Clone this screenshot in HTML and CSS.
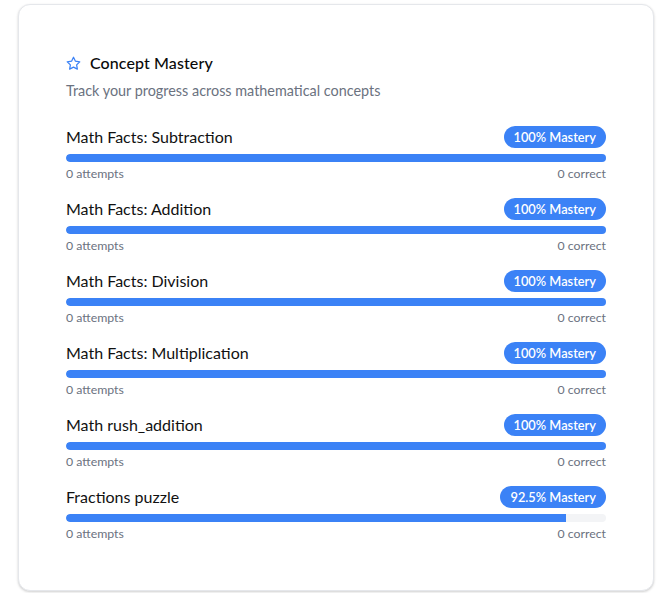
FILE: index.html
```html
<!DOCTYPE html>
<html>
<head>
<meta charset="utf-8">
<link rel="stylesheet" href="styles.css">
</head>
<body>
<div class="card">
  <div class="header">
    <h2 class="title">
      <svg class="star" viewBox="0 0 24 24" fill="none" stroke="currentColor" stroke-width="2" stroke-linecap="round" stroke-linejoin="round"><polygon points="12 2 15.09 8.26 22 9.27 17 14.14 18.18 21.02 12 17.77 5.82 21.02 7 14.14 2 9.27 8.91 8.26 12 2"/></svg>
      Concept Mastery
    </h2>
    <p class="subtitle">Track your progress across mathematical concepts</p>
  </div>
  <div class="list">
    <div class="item">
      <div class="row"><span class="label">Math Facts: Subtraction</span><span class="badge">100% Mastery</span></div>
      <div class="track"><div class="fill" style="width:100%"></div></div>
      <div class="meta"><span>0 attempts</span><span>0 correct</span></div>
    </div>
    <div class="item">
      <div class="row"><span class="label">Math Facts: Addition</span><span class="badge">100% Mastery</span></div>
      <div class="track"><div class="fill" style="width:100%"></div></div>
      <div class="meta"><span>0 attempts</span><span>0 correct</span></div>
    </div>
    <div class="item">
      <div class="row"><span class="label">Math Facts: Division</span><span class="badge">100% Mastery</span></div>
      <div class="track"><div class="fill" style="width:100%"></div></div>
      <div class="meta"><span>0 attempts</span><span>0 correct</span></div>
    </div>
    <div class="item">
      <div class="row"><span class="label">Math Facts: Multiplication</span><span class="badge">100% Mastery</span></div>
      <div class="track"><div class="fill" style="width:100%"></div></div>
      <div class="meta"><span>0 attempts</span><span>0 correct</span></div>
    </div>
    <div class="item">
      <div class="row"><span class="label">Math rush_addition</span><span class="badge">100% Mastery</span></div>
      <div class="track"><div class="fill" style="width:100%"></div></div>
      <div class="meta"><span>0 attempts</span><span>0 correct</span></div>
    </div>
    <div class="item">
      <div class="row"><span class="label">Fractions puzzle</span><span class="badge">92.5% Mastery</span></div>
      <div class="track"><div class="fill" style="width:92.5%"></div></div>
      <div class="meta"><span>0 attempts</span><span>0 correct</span></div>
    </div>
  </div>
</div>
</body>
</html>
```

FILE: styles.css
```css
* { box-sizing: border-box; }
html, body { margin: 0; background: #fff; }
body {
  padding: 4px 5px 2px 18px;
  font-family: "Lato", "Noto Sans", sans-serif;
  color: #111827;
}
.card {
  width: 636px;
  height: 587px;
  border: 1px solid #e5e7eb;
  border-radius: 12px;
  background: #fff;
  box-shadow: 0 1px 3px rgba(0,0,0,0.12), 0 1px 2px rgba(0,0,0,0.08);
  padding: 46px 47px 48px 47px;
}
.header { margin-bottom: 24px; }
.title {
  margin: 0;
  display: flex;
  align-items: center;
  gap: 9px;
  font-size: 16px;
  font-weight: 500;
  line-height: 24px;
  color: #0a0a0a;
  letter-spacing: 0.1px;
}
.star { width: 15px; height: 15px; color: #3b82f6; }
.subtitle {
  margin: 6px 0 0;
  font-size: 14.4px;
  line-height: 20px;
  color: #6b7280;
}
.list { display: flex; flex-direction: column; gap: 15px; }
.row {
  display: flex;
  justify-content: space-between;
  align-items: center;
  height: 24px;
}
.label { font-size: 16px; line-height: 24px; color: #111; }
.badge {
  background: #3b82f6;
  color: #fff;
  font-size: 12.8px;
  font-weight: 600;
  line-height: 22px;
  height: 22px;
  padding: 0 10px;
  border-radius: 11px;
}
.track {
  margin-top: 5px;
  height: 8px;
  background: #f3f4f6;
  border-radius: 4px;
  overflow: hidden;
}
.fill { height: 100%; background: #3b82f6; border-radius: 4px 0 0 4px; }
.meta {
  margin-top: 4px;
  display: flex;
  justify-content: space-between;
  font-size: 12.3px;
  line-height: 16px;
  color: #6b7280;
}
```
